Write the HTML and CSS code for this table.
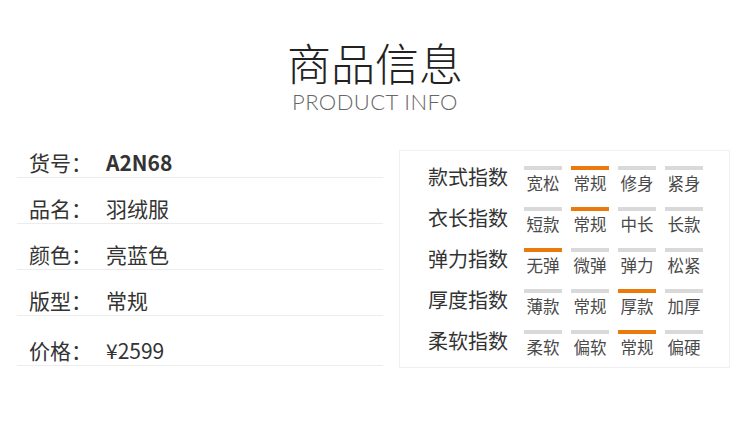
FILE: index.html
```html
<!DOCTYPE html>
<html lang="zh-CN">
<head>
<meta charset="utf-8">
<title>商品信息</title>
<link rel="stylesheet" href="styles.css">
</head>
<body>
<div class="page">
  <header class="head">
    <h1 class="title">商品信息</h1>
    <div class="subtitle">PRODUCT INFO</div>
  </header>
  <main class="main">
    <section class="specs">
      <div class="spec"><span class="spec-label">货号：</span><span class="spec-value spec-value--bold">A2N68</span></div>
      <div class="spec"><span class="spec-label">品名：</span><span class="spec-value">羽绒服</span></div>
      <div class="spec"><span class="spec-label">颜色：</span><span class="spec-value">亮蓝色</span></div>
      <div class="spec"><span class="spec-label">版型：</span><span class="spec-value">常规</span></div>
      <div class="spec spec--last"><span class="spec-label">价格：</span><span class="spec-value">¥2599</span></div>
    </section>
    <section class="index-panel">
      <div class="index-row">
        <div class="index-label">款式指数</div>
        <div class="opt"><i class="bar"></i><span>宽松</span></div>
        <div class="opt"><i class="bar bar--on"></i><span>常规</span></div>
        <div class="opt"><i class="bar"></i><span>修身</span></div>
        <div class="opt"><i class="bar"></i><span>紧身</span></div>
      </div>
      <div class="index-row">
        <div class="index-label">衣长指数</div>
        <div class="opt"><i class="bar"></i><span>短款</span></div>
        <div class="opt"><i class="bar bar--on"></i><span>常规</span></div>
        <div class="opt"><i class="bar"></i><span>中长</span></div>
        <div class="opt"><i class="bar"></i><span>长款</span></div>
      </div>
      <div class="index-row">
        <div class="index-label">弹力指数</div>
        <div class="opt"><i class="bar bar--on"></i><span>无弹</span></div>
        <div class="opt"><i class="bar"></i><span>微弹</span></div>
        <div class="opt"><i class="bar"></i><span>弹力</span></div>
        <div class="opt"><i class="bar"></i><span>松紧</span></div>
      </div>
      <div class="index-row">
        <div class="index-label">厚度指数</div>
        <div class="opt"><i class="bar"></i><span>薄款</span></div>
        <div class="opt"><i class="bar"></i><span>常规</span></div>
        <div class="opt"><i class="bar bar--on"></i><span>厚款</span></div>
        <div class="opt"><i class="bar"></i><span>加厚</span></div>
      </div>
      <div class="index-row">
        <div class="index-label">柔软指数</div>
        <div class="opt"><i class="bar"></i><span>柔软</span></div>
        <div class="opt"><i class="bar"></i><span>偏软</span></div>
        <div class="opt"><i class="bar bar--on"></i><span>常规</span></div>
        <div class="opt"><i class="bar"></i><span>偏硬</span></div>
      </div>
    </section>
  </main>
</div>
</body>
</html>
```

FILE: styles.css
```css
* { box-sizing: border-box; }
html, body {
  margin: 0;
  padding: 0;
  background: #fff;
}
body {
  font-family: "Noto Sans CJK SC", "Noto Sans", sans-serif;
  color: #333;
}
.page {
  width: 750px;
  height: 436px;
  overflow: hidden;
}
.head {
  padding-top: 39px;
  text-align: center;
}
.title {
  margin: 0;
  font-size: 44px;
  line-height: 46px;
  font-weight: 300;
  color: #222;
}
.subtitle {
  margin-top: 5px;
  font-family: "Lato", "Noto Sans", sans-serif;
  font-weight: 300;
  font-size: 22px;
  line-height: 24px;
  letter-spacing: 0.4px;
  color: #666;
}
.main {
  display: flex;
  align-items: flex-start;
  margin-top: 33px;
  padding-left: 17px;
}
.specs {
  width: 366px;
  display: flex;
  flex-direction: column;
}
.spec {
  display: flex;
  align-items: center;
  height: 31px;
  padding-left: 12px;
  border-bottom: 1px solid #ececec;
  font-size: 21px;
  color: #333;
}
.spec + .spec { margin-top: 15px; }
.spec--last.spec { margin-top: 19px; }
.spec-label {
  width: 77px;
  flex: none;
}
.spec-value--bold { font-weight: 700; }
.index-panel {
  margin-left: 16px;
  margin-top: 3px;
  width: 331px;
  height: 218px;
  border: 1px solid #f0f0f0;
  padding: 15px 0 0 28px;
  display: flex;
  flex-direction: column;
  gap: 14px;
}
.index-row {
  display: flex;
  align-items: center;
  gap: 9px;
}
.index-label {
  width: 87px;
  font-size: 20px;
  line-height: 24px;
  color: #333;
  margin-top: -5px;
}
.opt {
  width: 38px;
  display: flex;
  flex-direction: column;
  align-items: center;
}
.bar {
  display: block;
  width: 38px;
  height: 4px;
  background: #d9d9d9;
  margin-bottom: 3px;
}
.bar--on { background: #ea7a0c; }
.opt span {
  font-size: 16.5px;
  line-height: 20px;
  color: #4a4a4a;
  white-space: nowrap;
}
```
